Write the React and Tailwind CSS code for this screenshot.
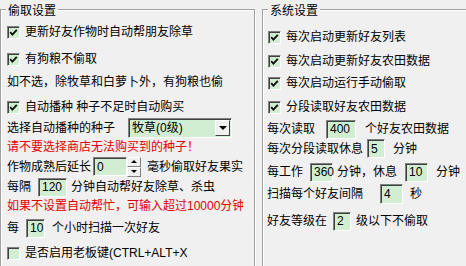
import React from "react";

function Check({ checked }) {
  return (
    <div className="w-[13px] h-[13px] shrink-0 border border-t-[#808080] border-l-[#808080] border-r-white border-b-white shadow-[inset_1px_1px_0_#404040] bg-[#d2eed2] flex items-center justify-center">
      {checked && (
        <svg width="11" height="11" viewBox="0 0 11 11">
          <path d="M2.2 5.2 L4.4 7.6 L8.8 2.8" fill="none" stroke="#111" strokeWidth="1.9" />
        </svg>
      )}
    </div>
  );
}

function CheckRow({ checked = true, label, className = "" }) {
  return (
    <div className={`flex items-center h-[20px] gap-[5px] whitespace-nowrap ${className}`}>
      <Check checked={checked} />
      <span>{label}</span>
    </div>
  );
}

function Field({ value, className = "" }) {
  return (
    <div
      className={`h-[19px] shrink-0 bg-[#d2eed2] border border-t-[#808080] border-l-[#808080] border-r-white border-b-white shadow-[inset_1px_1px_0_#404040] pl-[3px] flex items-center ${className}`}
    >
      {value}
    </div>
  );
}

function Spinner() {
  return (
    <div className="w-[14px] h-[20px] flex flex-col shrink-0">
      <div className="flex-1 bg-[#f0f0f0] border border-t-white border-l-white border-r-[#808080] border-b-[#808080] flex items-center justify-center">
        <div className="w-0 h-0 border-l-[3px] border-r-[3px] border-b-[3px] border-l-transparent border-r-transparent border-b-black" />
      </div>
      <div className="flex-1 bg-[#f0f0f0] border border-t-white border-l-white border-r-[#808080] border-b-[#808080] flex items-center justify-center">
        <div className="w-0 h-0 border-l-[3px] border-r-[3px] border-t-[3px] border-l-transparent border-r-transparent border-t-black" />
      </div>
    </div>
  );
}

function GroupBox({ title, className = "", children }) {
  return (
    <div
      className={`mt-[9px] h-[290px] shrink-0 border border-[#a0a0a0] shadow-[inset_1px_1px_0_#fff,1px_1px_0_#fff] ${className}`}
    >
      <div className="-mt-[7px] ml-[5px] w-fit px-[2px] h-[16px] flex items-center bg-[#f0f0f0]">{title}</div>
      {children}
    </div>
  );
}

export default function App() {
  return (
    <div className="w-[466px] h-[266px] bg-[#f0f0f0] overflow-hidden flex gap-[7px] text-[12px] leading-none text-black font-[family-name:'Liberation_Sans','Noto_Sans_CJK_SC',sans-serif]">
      <GroupBox title="偷取设置" className="w-[255px]">
        <div className="pl-[6px] flex flex-col">
          <CheckRow label="更新好友作物时自动帮朋友除草" className="mt-[3px]" />
          <CheckRow label="有狗粮不偷取" className="mt-[7px]" />
          <div className="mt-[3px] h-[20px] flex items-center whitespace-nowrap">如不选，除牧草和白萝卜外，有狗粮也偷</div>
          <CheckRow label="自动播种 种子不足时自动购买" className="mt-[5px]" />
          <div className="mt-[1px] h-[20px] flex items-center whitespace-nowrap">
            <span className="w-[121px]">选择自动播种的种子</span>
            <div className="w-[104px] h-[20px] bg-[#d2eed2] border border-t-[#808080] border-l-[#808080] border-r-white border-b-white shadow-[inset_1px_1px_0_#404040] flex items-center justify-between">
              <span className="pl-[3px]">牧草(0级)</span>
              <div className="w-[15px] h-[16px] mr-[1px] bg-[#f0f0f0] border border-t-white border-l-white border-r-[#404040] border-b-[#404040] flex items-center justify-center">
                <div className="w-0 h-0 border-l-[4px] border-r-[4px] border-t-[4px] border-l-transparent border-r-transparent border-t-black" />
              </div>
            </div>
          </div>
          <div className="h-[18px] flex items-center text-[#e00000] whitespace-nowrap">请不要选择商店无法购买到的种子！</div>
          <div className="h-[21px] flex items-center whitespace-nowrap">
            <span>作物成熟后延长</span>
            <Field value="0" className="ml-[2px] w-[34px]" />
            <Spinner />
            <span className="ml-[6px]">毫秒偷取好友果实</span>
          </div>
          <div className="h-[20px] flex items-center whitespace-nowrap">
            <span>每隔</span>
            <Field value="120" className="ml-[7px] w-[29px]" />
            <span className="ml-[4px]">分钟自动帮好友除草、杀虫</span>
          </div>
          <div className="h-[18px] w-[236px] overflow-hidden flex items-center text-[#e00000] whitespace-nowrap">
            如果不设置自动帮忙，可输入超过10000分钟
          </div>
          <div className="mt-[3px] h-[20px] flex items-center whitespace-nowrap">
            <span>每</span>
            <Field value="10" className="ml-[7px] w-[19px]" />
            <span className="ml-[7px]">个小时扫描一次好友</span>
          </div>
          <CheckRow checked={false} label="是否启用老板键(CTRL+ALT+X" className="mt-[5px]" />
        </div>
      </GroupBox>

      <GroupBox title="系统设置" className="w-[250px]">
        <div className="pl-[4px] flex flex-col">
          <CheckRow label="每次启动更新好友列表" className="mt-[8px] ml-[1px]" />
          <CheckRow label="每次启动更新好友农田数据" className="mt-[4px] ml-[1px]" />
          <CheckRow label="每次启动运行手动偷取" className="mt-[2px] ml-[1px]" />
          <CheckRow label="分段读取好友农田数据" className="mt-[4px] ml-[1px]" />
          <div className="mt-[2px] h-[20px] flex items-center whitespace-nowrap">
            <span>每次读取</span>
            <Field value="400" className="ml-[11px] w-[30px]" />
            <span className="ml-[9px]">个好友农田数据</span>
          </div>
          <div className="h-[19px] flex items-center whitespace-nowrap">
            <span>每次分段读取休息</span>
            <Field value="5" className="ml-[4px] w-[18px]" />
            <span className="ml-[8px]">分钟</span>
          </div>
          <div className="mt-[4px] h-[20px] flex items-center whitespace-nowrap">
            <span>每工作</span>
            <Field value="360" className="ml-[7px] w-[23px]" />
            <span className="ml-[4px]">分钟，休息</span>
            <Field value="10" className="ml-[8px] w-[23px]" />
            <span className="ml-[8px]">分钟</span>
          </div>
          <div className="mt-[2px] h-[20px] flex items-center whitespace-nowrap">
            <span>扫描每个好友间隔</span>
            <Field value="4" className="ml-[17px] w-[23px] h-[20px]" />
            <span className="ml-[7px]">秒</span>
          </div>
          <div className="mt-[7px] h-[20px] flex items-center whitespace-nowrap">
            <span>好友等级在</span>
            <Field value="2" className="ml-[6px] w-[18px]" />
            <span className="ml-[5px]">级以下不偷取</span>
          </div>
        </div>
      </GroupBox>
    </div>
  );
}
